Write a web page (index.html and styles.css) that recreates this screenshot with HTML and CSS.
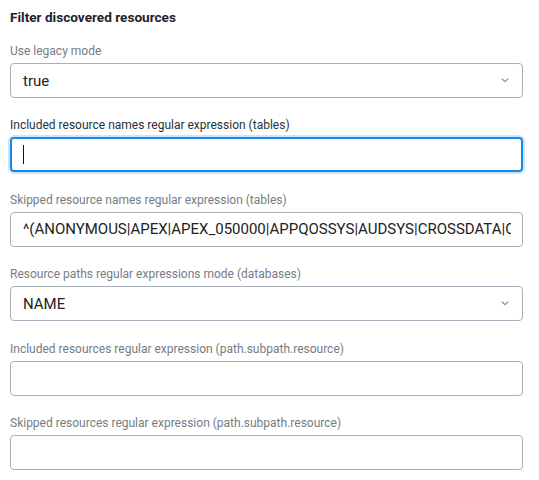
FILE: index.html
```html
<!DOCTYPE html>
<html lang="en">
<head>
<meta charset="utf-8">
<title>Filter discovered resources</title>
<link rel="stylesheet" href="styles.css">
</head>
<body>
<div class="panel">
  <h2 class="title">Filter discovered resources</h2>

  <div class="field">
    <div class="label">Use legacy mode</div>
    <div class="box select">
      <span class="value">true</span>
      <svg class="chev" width="8" height="5" viewBox="0 0 8 5"><path d="M0.8 0.8 L4 3.8 L7.2 0.8" fill="none" stroke="#8a96a8" stroke-width="1.2"/></svg>
    </div>
  </div>

  <div class="field">
    <div class="label focus-label">Included resource names regular expression (tables)</div>
    <div class="box focused"><span class="caret"></span></div>
  </div>

  <div class="field">
    <div class="label">Skipped resource names regular expression (tables)</div>
    <div class="box"><span class="value clip">^(ANONYMOUS|APEX|APEX_050000|APPQOSSYS|AUDSYS|CROSSDATA|CTXSYS)$</span></div>
  </div>

  <div class="field">
    <div class="label">Resource paths regular expressions mode (databases)</div>
    <div class="box select">
      <span class="value">NAME</span>
      <svg class="chev" width="8" height="5" viewBox="0 0 8 5"><path d="M0.8 0.8 L4 3.8 L7.2 0.8" fill="none" stroke="#8a96a8" stroke-width="1.2"/></svg>
    </div>
  </div>

  <div class="field">
    <div class="label">Included resources regular expression (path.subpath.resource)</div>
    <div class="box"></div>
  </div>

  <div class="field">
    <div class="label">Skipped resources regular expression (path.subpath.resource)</div>
    <div class="box"></div>
  </div>
</div>
</body>
</html>
```
FILE: styles.css
```css
html, body {
  margin: 0;
  padding: 0;
  background: #ffffff;
}
body {
  font-family: Roboto, "Liberation Sans", sans-serif;
  color: #222222;
}
.panel {
  padding: 7px 16px 0 10px;
  display: flex;
  flex-direction: column;
}
.title {
  margin: 0 0 16px 0;
  font-size: 13.6px;
  line-height: 20px;
  font-weight: 700;
  color: #1f2328;
}
.field {
  display: flex;
  flex-direction: column;
  margin-bottom: 19.4px;
}
.label {
  font-size: 12px;
  line-height: 16px;
  color: #767c85;
  margin-bottom: 4px;
  white-space: nowrap;
}
.focus-label {
  color: #2b3036;
}
.box {
  box-sizing: border-box;
  height: 35px;
  border: 1px solid #a7b0bd;
  border-radius: 4px;
  padding: 0 11px 0 12px;
  display: flex;
  align-items: center;
  overflow: hidden;
  background: #fff;
}
.value {
  font-size: 15px;
  color: #222;
  white-space: nowrap;
}
.clip {
  overflow: hidden;
  flex: 1;
  min-width: 0;
}
.select {
  justify-content: space-between;
  padding-right: 12px;
}
.chev {
  display: block;
  margin-right: 1px;
}
.focused {
  border: 2px solid #1a86e6;
  box-shadow: 0 0 0 2px rgba(26, 134, 230, 0.22);
  padding-left: 11px;
}
.caret {
  display: block;
  width: 1px;
  height: 19px;
  background: #111;
}
```
